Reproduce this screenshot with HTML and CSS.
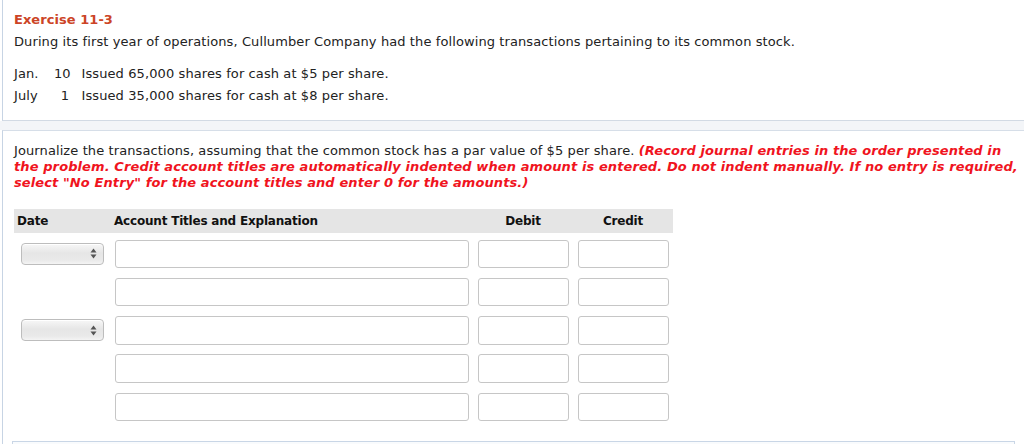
FILE: index.html
```html
<!DOCTYPE html>
<html>
<head>
<meta charset="utf-8">
<link rel="stylesheet" href="styles.css">
</head>
<body>
<div class="panel-top">
  <div class="title">Exercise 11-3</div>
  <div class="intro">During its first year of operations, Cullumber Company had the following transactions pertaining to its common stock.</div>
  <div class="txns">
    <span class="mon">Jan.</span><span class="day">10</span><span class="desc">Issued 65,000 shares for cash at $5 per share.</span>
    <span class="mon">July</span><span class="day">1</span><span class="desc">Issued 35,000 shares for cash at $8 per share.</span>
  </div>
</div>
<div class="gap"></div>
<div class="panel-main">
  <p class="instr">Journalize the transactions, assuming that the common stock has a par value of $5 per share. <em class="warn">(Record journal entries in the order presented in the problem. Credit account titles are automatically indented when amount is entered. Do not indent manually. If no entry is required, select "No Entry" for the account titles and enter 0 for the amounts.)</em></p>
  <div class="journal">
    <div class="hdr hdr-date">Date</div>
    <div class="hdr hdr-acct">Account Titles and Explanation</div>
    <div class="hdr hdr-num">Debit</div>
    <div class="hdr hdr-num">Credit</div>

    <div class="cell cell-date"><div class="select"><svg width="7" height="11" viewBox="0 0 7 11"><path d="M3.5 0.5 L6.5 4.5 L0.5 4.5 Z M3.5 10.5 L6.5 6.5 L0.5 6.5 Z" fill="#555"/></svg></div></div>
    <div class="cell"><div class="inp inp-acct"></div></div>
    <div class="cell"><div class="inp inp-num"></div></div>
    <div class="cell"><div class="inp inp-num"></div></div>

    <div class="cell cell-date"></div>
    <div class="cell"><div class="inp inp-acct"></div></div>
    <div class="cell"><div class="inp inp-num"></div></div>
    <div class="cell"><div class="inp inp-num"></div></div>

    <div class="cell cell-date"><div class="select"><svg width="7" height="11" viewBox="0 0 7 11"><path d="M3.5 0.5 L6.5 4.5 L0.5 4.5 Z M3.5 10.5 L6.5 6.5 L0.5 6.5 Z" fill="#555"/></svg></div></div>
    <div class="cell"><div class="inp inp-acct"></div></div>
    <div class="cell"><div class="inp inp-num"></div></div>
    <div class="cell"><div class="inp inp-num"></div></div>

    <div class="cell cell-date"></div>
    <div class="cell"><div class="inp inp-acct"></div></div>
    <div class="cell"><div class="inp inp-num"></div></div>
    <div class="cell"><div class="inp inp-num"></div></div>

    <div class="cell cell-date"></div>
    <div class="cell"><div class="inp inp-acct"></div></div>
    <div class="cell"><div class="inp inp-num"></div></div>
    <div class="cell"><div class="inp inp-num"></div></div>
  </div>
  <div class="next-box"></div>
</div>
</body>
</html>
```

FILE: styles.css
```css
html, body {
  margin: 0;
  padding: 0;
  background: #fff;
}
body {
  font-family: "DejaVu Sans", Verdana, sans-serif;
  font-size: 13px;
  letter-spacing: 0.1px;
  color: #222;
  overflow: hidden;
}
.panel-top {
  margin-left: 2px;
  border-left: 1px solid #c7d4e4;
  border-bottom: 1px solid #d2dae4;
  padding: 8.5px 0 0 11px;
  height: 111px;
  line-height: 22px;
}
.title {
  font-weight: bold;
  color: #cc4426;
  letter-spacing: 0.05px;
}
.txns {
  margin-top: 10.7px;
  display: grid;
  grid-template-columns: 40px 15px 1fr;
}
.day {
  text-align: right;
}
.desc {
  padding-left: 12.5px;
}
.gap {
  height: 9px;
  background: #f3f5f8;
}
.panel-main {
  margin-left: 2px;
  border-left: 1px solid #c7d4e4;
  border-top: 1px solid #d6dee8;
  padding: 12.5px 0 0 11px;
}
.instr {
  margin: 0;
  line-height: 16px;
  padding-right: 0;
}
.warn {
  font-weight: bold;
  font-style: italic;
  color: #f0141e;
}
.journal {
  margin-top: 17.5px;
  display: grid;
  grid-template-columns: 97px 362px 100px 100px;
  grid-auto-rows: 38.33px;
  grid-template-rows: 31px;
  width: 659px;
}
.hdr {
  background: #e5e5e5;
  height: 23px;
  padding: 1px 3px 0;
  line-height: 23px;
  font-size: 12px;
  letter-spacing: -0.2px;
  font-weight: bold;
  color: #111;
}
.hdr-num {
  text-align: center;
}
.cell {
  display: flex;
  justify-content: center;
  align-items: flex-start;
}
.cell-date {
  justify-content: flex-start;
  padding-left: 7px;
}
.inp {
  box-sizing: border-box;
  height: 28.5px;
  border: 1px solid #c6c6c6;
  border-radius: 3px;
  background: #fff;
}
.inp-acct {
  width: 354px;
}
.inp-num {
  width: 91px;
}
.select {
  box-sizing: border-box;
  margin-top: 3px;
  width: 83px;
  height: 22px;
  border: 1px solid #bdbdbd;
  border-radius: 4px;
  background: linear-gradient(#f7f7f7, #e6e6e6 45%, #e9e9e9 80%, #f4f4f4);
  box-shadow: inset 0 1px 0 #fff;
  display: flex;
  align-items: center;
  justify-content: flex-end;
  padding-right: 6px;
}
.next-box {
  margin: 10px 9px 0 -2px;
  height: 40px;
  border: 1px solid #c9d6e6;
  background: #f9fbfd;
}
```
